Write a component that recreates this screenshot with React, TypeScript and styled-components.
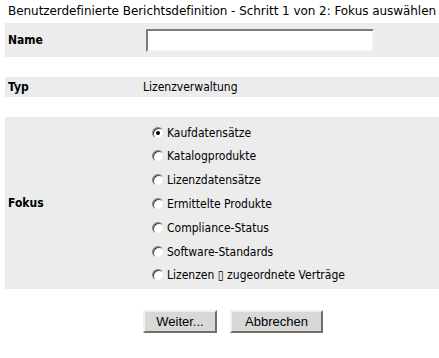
import styled, { createGlobalStyle } from 'styled-components';

const GlobalStyle = createGlobalStyle`
    body {
        margin: 0;
        background: #FFFFFF;
        font-family: "DejaVu Sans Condensed", "DejaVu Sans", sans-serif;
        font-size: 12px;
        color: #000000;
    }
`

const options = [
    'Kaufdatensätze',
    'Katalogprodukte',
    'Lizenzdatensätze',
    'Ermittelte Produkte',
    'Compliance-Status',
    'Software-Standards',
    'Lizenzen \u25AF zugeordnete Verträge',
];

const App = () => {
    return (
        <>
            <GlobalStyle />
            <Page>
                <Title>Benutzerdefinierte Berichtsdefinition - Schritt 1 von 2: Fokus auswählen</Title>
                <Row $height={34}>
                    <Label>Name</Label>
                    <Value>
                        <TextInput type="text" />
                    </Value>
                </Row>
                <Spacer />
                <Row $height={20}>
                    <Label>Typ</Label>
                    <Value>Lizenzverwaltung</Value>
                </Row>
                <Spacer />
                <Row $height={172}>
                    <Label>Fokus</Label>
                    <RadioList>
                        {options.map((option, i) =>
                            <RadioItem key={option}>
                                <Radio $checked={i === 0} />
                                <span>{option}</span>
                            </RadioItem>
                        )}
                    </RadioList>
                </Row>
                <Buttons>
                    <Button $width={74}>Weiter...</Button>
                    <Button $width={93}>Abbrechen</Button>
                </Buttons>
            </Page>
        </>
    );
}

export default App;

const Page = styled.div`
    display: flex;
    flex-direction: column;
    padding: 4px 0 0 5px;
`

const Title = styled.div`
    padding-left: 3px;
    height: 19px;
    line-height: 15px;
    white-space: nowrap;
    font-family: "DejaVu Sans", sans-serif;
    letter-spacing: -0.05px;
`

const Row = styled.div<{ $height: number }>`
    display: grid;
    grid-template-columns: 138px 1fr;
    align-items: center;
    height: ${p => p.$height}px;
    background: #ECECEC;
`

const Spacer = styled.div`
    height: 20px;
`

const Label = styled.div`
    padding-left: 3px;
    font-weight: bold;
`

const Value = styled.div`
    display: flex;
    align-items: center;
`

const TextInput = styled.input`
    box-sizing: border-box;
    margin-left: 3px;
    width: 228px;
    height: 23px;
    background: #FFFFFF;
    border: 2px solid;
    border-color: #7F7B70 #F4F2E8 #F4F2E8 #7F7B70;
    outline: none;
`

const RadioList = styled.div`
    display: flex;
    flex-direction: column;
    padding-top: 2px;
`

const RadioItem = styled.div`
    display: flex;
    align-items: center;
    gap: 3px;
    height: 23.8px;
    padding-left: 9px;
`

const Radio = styled.span<{ $checked: boolean }>`
    box-sizing: border-box;
    width: 12px;
    height: 12px;
    border-radius: 50%;
    background: #FFFFFF;
    border: 1px solid;
    border-color: #808080 #E8E6DE #E8E6DE #808080;
    box-shadow: inset 1px 1px 0 #404040;
    display: flex;
    align-items: center;
    justify-content: center;
    &::after {
        content: '';
        width: 4px;
        height: 4px;
        border-radius: 50%;
        background: #000000;
        display: ${p => p.$checked ? 'block' : 'none'};
    }
`

const Buttons = styled.div`
    display: flex;
    gap: 13px;
    padding: 21px 0 0 138px;
`

const Button = styled.button<{ $width: number }>`
    box-sizing: border-box;
    width: ${p => p.$width}px;
    height: 23px;
    padding: 0;
    font-family: "Liberation Sans", Arial, sans-serif;
    font-size: 13px;
    color: #000000;
    background: #D8D8D8;
    border: 2px solid;
    border-color: #F4F2E8 #716F64 #716F64 #F4F2E8;
`
